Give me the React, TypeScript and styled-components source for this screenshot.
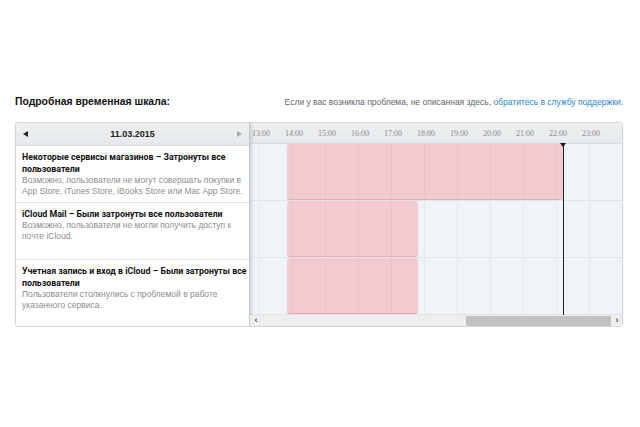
import styled, { createGlobalStyle } from "styled-components";

const GlobalStyle = createGlobalStyle`
  body {
    margin: 0;
    background: #fff;
    font-family: "Liberation Sans", Arial, sans-serif;
    color: #222;
  }
`;

const HOUR_WIDTH = 33;
const FIRST_HOUR = 13;
const FIRST_LINE = 9; // offset of the 13:00 line inside the timeline
const HOURS = [13, 14, 15, 16, 17, 18, 19, 20, 21, 22, 23];

const Page = styled.div`
  padding: 94px 17px 0 15px;
`;

const TopBar = styled.div`
  display: flex;
  justify-content: space-between;
  align-items: baseline;
  margin-bottom: 13px;
`;

const Title = styled.h2`
  margin: 0;
  font-size: 10.4px;
  line-height: 15px;
  font-weight: bold;
  color: #111;
`;

const Note = styled.p`
  margin: 0;
  font-size: 8.5px;
  color: #666;

  a {
    color: #1f86c9;
    text-decoration: none;
  }
`;

const Board = styled.div`
  display: flex;
  height: 203px;
  border: 1px solid #d4d7d9;
  border-radius: 3px;
  box-shadow: 0 1px 2px rgba(0, 0, 0, 0.08);
  overflow: hidden;
`;

const LeftPanel = styled.div`
  width: 233px;
  flex: none;
  border-right: 1px solid #c4c8cb;
  background: #fff;
  position: relative;
  z-index: 1;
  box-shadow: 2px 0 3px rgba(0, 0, 0, 0.12);
`;

const HeadBar = styled.div`
  height: 22px;
  display: flex;
  align-items: center;
  background: linear-gradient(#eef0f1, #e6e9eb);
  border-bottom: 1px solid #d9dcde;
`;

const DateBar = styled(HeadBar)`
  justify-content: space-between;
  padding: 0 7px;
`;

const DateLabel = styled.span`
  font-size: 9px;
  font-weight: bold;
  color: #222;
`;

const Arrow = styled.span<{ $dir: "left" | "right"; $muted?: boolean }>`
  width: 0;
  height: 0;
  border-top: 3px solid transparent;
  border-bottom: 3px solid transparent;
  ${({ $dir, $muted }) =>
    $dir === "left"
      ? `border-right: 5px solid ${$muted ? "#aaa" : "#222"};`
      : `border-left: 5px solid ${$muted ? "#aaa" : "#222"};`}
`;

const IssueRow = styled.div`
  box-sizing: border-box;
  height: 57px;
  padding: 5px 0 0 6px;
  border-bottom: 1px solid #e0e3e5;

  &:last-child {
    border-bottom: none;
  }
`;

const IssueTitle = styled.div`
  font-family: Roboto, "Liberation Sans", Arial, sans-serif;
  font-size: 8.8px;
  line-height: 12px;
  font-weight: bold;
  color: #111;
`;

const IssueText = styled.div`
  font-size: 8.5px;
  line-height: 11px;
  color: #8d8d8d;
`;

const Timeline = styled.div`
  flex: 1;
  min-width: 0;
  display: flex;
  flex-direction: column;
  position: relative;
  background: #eff4f8;
`;

const HourBar = styled(HeadBar)`
  overflow: hidden;
`;

const HourTrack = styled.div`
  display: flex;
  margin-left: ${FIRST_LINE - HOUR_WIDTH / 2 + 2}px;
`;

const HourLabel = styled.span`
  width: ${HOUR_WIDTH}px;
  flex: none;
  text-align: center;
  font-family: "Liberation Serif", "Times New Roman", serif;
  font-size: 8px;
  color: #8a8a8a;
`;

const GridBody = styled.div`
  flex: 1;
  background-image: linear-gradient(to right, #e2e8ec 1px, transparent 1px);
  background-size: ${HOUR_WIDTH}px 100%;
  background-position: ${FIRST_LINE}px 0;
`;

const GridRow = styled.div`
  position: relative;
  height: 56px;
  border-bottom: 1px solid #dfe4e8;
`;

const Outage = styled.div`
  position: absolute;
  top: 0;
  bottom: 0;
  border-radius: 3px;
  background: rgba(250, 120, 132, 0.33);
  box-shadow: inset 0 -1px 0 rgba(240, 90, 100, 0.3);
`;

const NowLine = styled.div`
  position: absolute;
  top: 20px;
  bottom: 11px;
  width: 1px;
  background: #222;

  &::before {
    content: "";
    position: absolute;
    top: 0;
    left: -3px;
    border-left: 3.5px solid transparent;
    border-right: 3.5px solid transparent;
    border-top: 4px solid #111;
  }
`;

const ScrollBar = styled.div`
  height: 11px;
  display: flex;
  align-items: stretch;
  background: #efefef;
  position: relative;
  z-index: 2;
  margin-top: auto;
`;

const ScrollButton = styled.span`
  width: 12px;
  flex: none;
  display: flex;
  align-items: center;
  justify-content: center;
  font-size: 9px;
  font-weight: bold;
  color: #555;
  line-height: 1;
`;

const ScrollTrack = styled.div`
  flex: 1;
  display: flex;
  padding: 1px 0 0;
`;

const ScrollThumb = styled.div`
  background: #c2c2c2;
  height: 10px;
`;

const hourX = (h: number) => FIRST_LINE + (h - FIRST_HOUR) * HOUR_WIDTH;

const issues = [
  {
    title: "Некоторые сервисы магазинов – Затронуты все пользователи",
    text: "Возможно, пользователи не могут совершать покупки в App Store, iTunes Store, iBooks Store или Mac App Store.",
    start: 13.85,
    end: 22.2,
  },
  {
    title: "iCloud Mail – Были затронуты все пользователи",
    text: "Возможно, пользователи не могли получить доступ к почте iCloud.",
    start: 13.85,
    end: 17.82,
  },
  {
    title: "Учетная запись и вход в iCloud – Были затронуты все пользователи",
    text: "Пользователи столкнулись с проблемой в работе указанного сервиса.",
    start: 13.85,
    end: 17.82,
  },
];

const NOW = 22.2;

export default function App() {
  return (
    <>
      <GlobalStyle />
      <Page>
        <TopBar>
          <Title>Подробная временная шкала:</Title>
          <Note>
            Если у вас возникла проблема, не описанная здесь,{" "}
            <a href="#">обратитесь в службу поддержки.</a>
          </Note>
        </TopBar>
        <Board>
          <LeftPanel>
            <DateBar>
              <Arrow $dir="left" />
              <DateLabel>11.03.2015</DateLabel>
              <Arrow $dir="right" $muted />
            </DateBar>
            {issues.map((issue) => (
              <IssueRow key={issue.title}>
                <IssueTitle>{issue.title}</IssueTitle>
                <IssueText>{issue.text}</IssueText>
              </IssueRow>
            ))}
          </LeftPanel>
          <Timeline>
            <HourBar>
              <HourTrack>
                {HOURS.map((h) => (
                  <HourLabel key={h}>{h}:00</HourLabel>
                ))}
              </HourTrack>
            </HourBar>
            <GridBody>
              {issues.map((issue) => (
                <GridRow key={issue.title}>
                  <Outage
                    style={{
                      left: hourX(issue.start),
                      width: hourX(issue.end) - hourX(issue.start),
                    }}
                  />
                </GridRow>
              ))}
            </GridBody>
            <NowLine style={{ left: hourX(NOW) }} />
            <ScrollBar>
              <ScrollButton>‹</ScrollButton>
              <ScrollTrack>
                <ScrollThumb style={{ marginLeft: 204, width: 145 }} />
              </ScrollTrack>
              <ScrollButton>›</ScrollButton>
            </ScrollBar>
          </Timeline>
        </Board>
      </Page>
    </>
  );
}
